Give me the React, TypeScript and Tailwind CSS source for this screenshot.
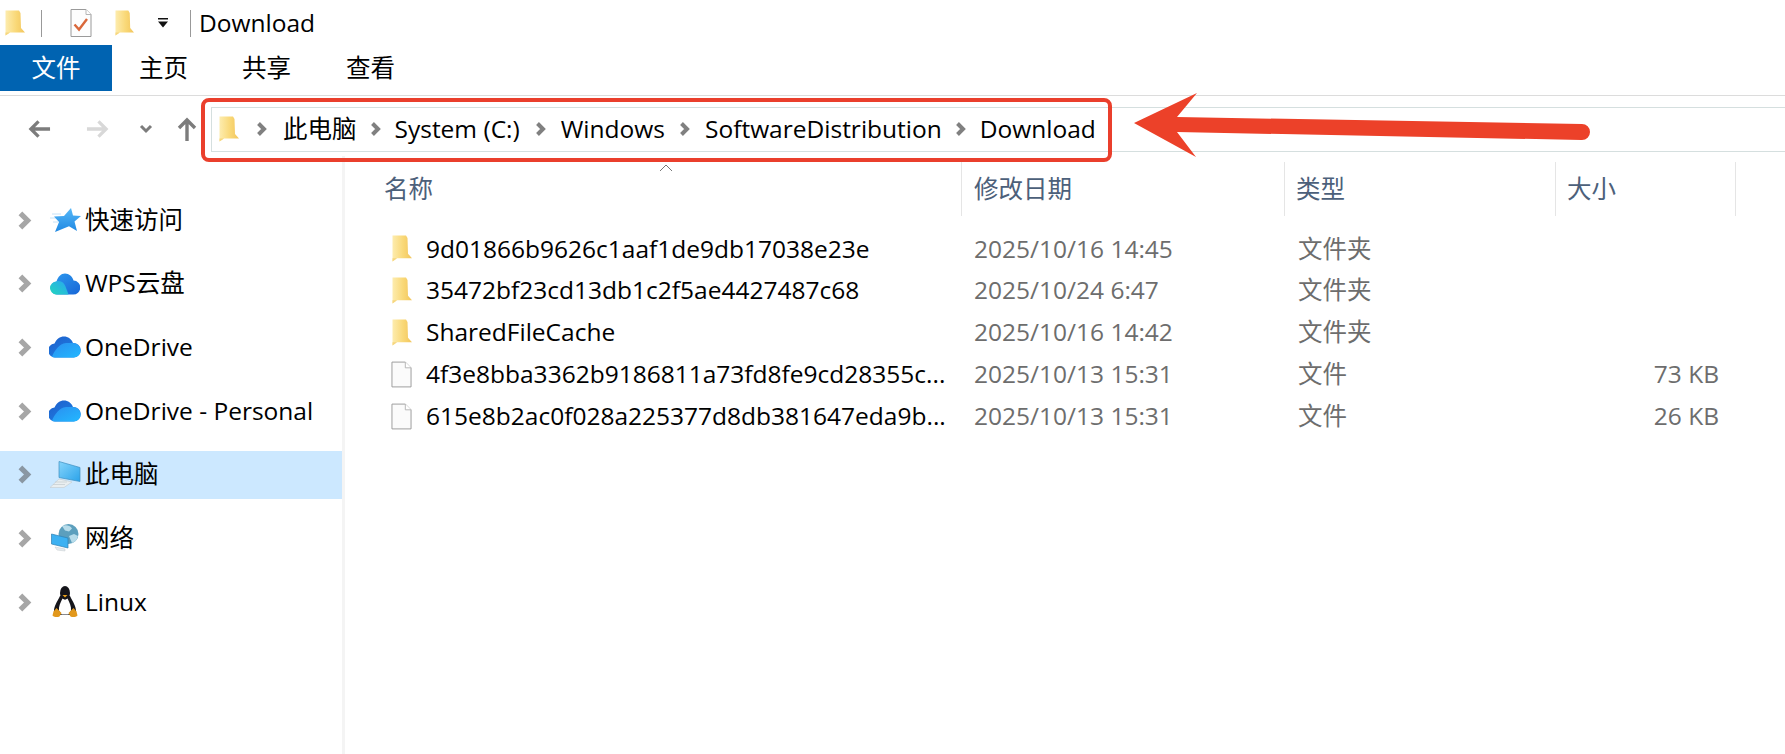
import React from "react";

const FolderIcon = ({ className = "w-[20px] h-[26px]" }: { className?: string }) => (
  <svg viewBox="0 0 20 26" className={className} preserveAspectRatio="none">
    <defs>
      <linearGradient id="fold" x1="0" y1="0" x2="1" y2="0">
        <stop offset="0" stopColor="#fdecae" />
        <stop offset="0.55" stopColor="#f9d877" />
        <stop offset="1" stopColor="#f2c55c" />
      </linearGradient>
    </defs>
    <path d="M0.500 0.500h13.500l1.500 2.500.5 15 4 4.500H5L0.500 25.500z" fill="url(#fold)" />
    <path d="M0.500 22.500H5L0.500 25.500z" fill="#f6d67f" />
  </svg>
);

const FileIcon = () => (
  <svg viewBox="0 0 22 27" className="h-[27px] w-[22px]">
    <path d="M1 .5h14l6 6v20H1z" fill="#fbfbfb" stroke="#9a9a9a" />
    <path d="M15 .5v6h6" fill="#fff" stroke="#b5b5b5" />
  </svg>
);

const DocCheckIcon = () => (
  <svg viewBox="0 0 22 28" className="h-[28px] w-[22px]">
    <path d="M1 .5h15l5 5v22H1z" fill="#fdfdfd" stroke="#9a9a9a" />
    <path d="M16 .5v5h5" fill="#fff" stroke="#b5b5b5" />
    <path d="M4.500 15.500 9 20.500 17 10" fill="none" stroke="#d9673a" strokeWidth="2.400" />
  </svg>
);

// size comes from the caller
const Chevron = ({ className = "" }: { className?: string }) => (
  <svg viewBox="0 0 12 16" className={className}>
    <path d="M2.500 2.500 8 8 2.500 13.500" fill="none" stroke="currentColor" strokeWidth="4" />
  </svg>
);

const StarIcon = () => (
  <svg viewBox="0 0 32 24" className="h-[24px] w-[32px]">
    <defs>
      <linearGradient id="star" x1="0" y1="0" x2="0" y2="1">
        <stop offset="0" stopColor="#56b8f8" />
        <stop offset="1" stopColor="#1f88e2" />
      </linearGradient>
    </defs>
    <path d="M3 6h9M1 10h8M4 14h5" stroke="#c6e2f7" strokeWidth="1" />
    <path d="M22 0l2 7.500L32 8l-6.500 5.500L28 23l-8-4.800L6 24l4-10L5 8.500l10-.5z" fill="url(#star)" />
  </svg>
);

const WpsCloud = () => (
  <svg viewBox="0 0 30 22" className="h-[22px] w-[30px]">
    <defs>
      <linearGradient id="wpsA" x1="0" y1="1" x2="1" y2="0">
        <stop offset="0" stopColor="#22d6bd" />
        <stop offset="1" stopColor="#2aa5f2" />
      </linearGradient>
      <linearGradient id="wpsB" x1="0" y1="0" x2="1" y2="1">
        <stop offset="0" stopColor="#2e9bf0" />
        <stop offset="1" stopColor="#1766d6" />
      </linearGradient>
    </defs>
    <path d="M8 21.500a6.500 6.500 0 0 1-1.500-13C8 3.500 11 .5 15 .5c4 0 7.500 3 8.500 7a7 7 0 0 1-.5 14z" fill="url(#wpsB)" />
    <path d="M6.500 21.500a6.500 6.500 0 0 1 0-13c4-1.500 7.500.8 9 5l3 8z" fill="url(#wpsA)" />
  </svg>
);

const OneDriveCloud = () => (
  <svg viewBox="0 0 32 22" className="h-[22px] w-[32px]">
    <defs>
      <linearGradient id="odA" x1="0" y1="0" x2="1" y2="1">
        <stop offset="0" stopColor="#1d5ecb" />
        <stop offset="1" stopColor="#1f86e8" />
      </linearGradient>
      <linearGradient id="odB" x1="0" y1="0" x2="1" y2="1">
        <stop offset="0" stopColor="#2b8ff0" />
        <stop offset="1" stopColor="#22b8ff" />
      </linearGradient>
    </defs>
    <path d="M7 21.500A7 7 0 0 1 5.500 7.500C7.500 3 11 .5 15 .5c4 0 7.500 2.500 9 6.500a7 7 0 0 1 1 14.500z" fill="url(#odA)" />
    <path d="M3 20.500C6 14 10 8 17 7l7 0a7.500 7.500 0 0 1 7.500 7.500c0 4-3 7-7 7H7c-2 0-3-.3-4-1z" fill="url(#odB)" />
  </svg>
);

const PcIcon = () => (
  <svg viewBox="0 0 32 27" className="h-[27px] w-[32px]">
    <defs>
      <linearGradient id="pc" x1="0" y1="0" x2="1" y2="1">
        <stop offset="0" stopColor="#86d4fb" />
        <stop offset="1" stopColor="#2ba3ea" />
      </linearGradient>
    </defs>
    <path d="M10 .5l21 6v14L10 16.500z" fill="url(#pc)" stroke="#3f8fc0" strokeWidth="0.700" />
    <path d="M10 18l13 3-8 5.500H1z" fill="#e9eef0" stroke="#c4cbcf" strokeWidth="0.600" />
    <path d="M6 21h12M4 23.500h12" stroke="#c4cbcf" strokeWidth="0.700" />
  </svg>
);

const NetworkIcon = () => (
  <svg viewBox="0 0 28 28" className="h-[28px] w-[28px]">
    <circle cx="17.500" cy="10" r="10" fill="#5c9fbd" />
    <path d="M11 2c4-1.500 8-.5 10 2.500l-3 3-4-1zM18 12l5-2 4 2c-1 4-3 6-6 7z" fill="#b7dcea" />
    <path d="M.5 10l16.500 4v10L.5 20z" fill="#3cb1f2" stroke="#2f80b2" strokeWidth="0.700" />
    <path d="M4 23l10 2v2l-8-1z" fill="#e6ecef" stroke="#c4cbcf" strokeWidth="0.500" />
  </svg>
);

const TuxIcon = () => (
  <svg viewBox="0 0 26 32" className="h-[32px] w-[26px]">
    <ellipse cx="13" cy="7" rx="5" ry="7" fill="#15151a" />
    <path d="M8 10C5 16 2 20 2 25l3 4h16l3-4c0-5-3-9-6-15z" fill="#15151a" />
    <path d="M10.500 12.500c-2 4-4 8-3.500 12l2.500 4h7l2.500-4c.5-4-1.500-8-3.500-12-1.500 1.500-3.500 1.500-5 0z" fill="#fff" />
    <path d="M10.500 9h5L13 11.500z" fill="#e8a01c" />
    <path d="M4.500 22l5 5-2 3.500c-2.500 1.200-5.500.5-7-1L1.500 25.500z" fill="#e2981c" />
    <path d="M21.500 22l-5 5 2 3.500c2.500 1.200 5.500.5 7-1L24.500 25.500z" fill="#e2981c" />
  </svg>
);

const navItems: { label: string; icon: React.ReactNode; active?: boolean }[] = [
  { label: "快速访问", icon: <StarIcon /> },
  { label: "WPS云盘", icon: <WpsCloud /> },
  { label: "OneDrive", icon: <OneDriveCloud /> },
  { label: "OneDrive - Personal", icon: <OneDriveCloud /> },
  { label: "此电脑", icon: <PcIcon />, active: true },
  { label: "网络", icon: <NetworkIcon /> },
  { label: "Linux", icon: <TuxIcon /> },
];

const files = [
  { name: "9d01866b9626c1aaf1de9db17038e23e", date: "2025/10/16 14:45", type: "文件夹", size: "", dir: true },
  { name: "35472bf23cd13db1c2f5ae4427487c68", date: "2025/10/24 6:47", type: "文件夹", size: "", dir: true },
  { name: "SharedFileCache", date: "2025/10/16 14:42", type: "文件夹", size: "", dir: true },
  { name: "4f3e8bba3362b9186811a73fd8fe9cd28355c...", date: "2025/10/13 15:31", type: "文件", size: "73 KB", dir: false },
  { name: "615e8b2ac0f028a225377d8db381647eda9b...", date: "2025/10/13 15:31", type: "文件", size: "26 KB", dir: false },
];

const crumbs = [
  { label: "此电脑", chevron: "ml-[17px]", text: "ml-[15px]" },
  { label: "System (C:)", chevron: "mx-[13px]", text: "" },
  { label: "Windows", chevron: "ml-[15px] mr-[14px]", text: "" },
  { label: "SoftwareDistribution", chevron: "mx-[14px]", text: "" },
  { label: "Download", chevron: "mx-[13px]", text: "" },
];

export default function App() {
  return (
    <div className="relative h-[754px] w-[1785px] overflow-hidden bg-white font-['Open_Sans','Noto_Sans_CJK_SC',sans-serif] text-[24.500px] text-black">
      {/* title bar */}
      <div className="flex h-[45px] items-center pl-[5px] pt-[1px]">
        <FolderIcon className="h-[26px] w-[20px]" />
        <div className="ml-[16px] h-[27px] w-px bg-[#999]" />
        <div className="ml-[28px]"><DocCheckIcon /></div>
        <div className="ml-[23px]"><FolderIcon className="h-[26px] w-[19px]" /></div>
        <svg viewBox="0 0 12 10" className="ml-[23px] h-[10px] w-[12px]">
          <path d="M1 0h10v1.500H1zM1 3.500h10L6 9.500z" fill="#111" />
        </svg>
        <div className="ml-[21px] h-[27px] w-px bg-[#999]" />
        <span className="ml-[8px]">Download</span>
      </div>

      {/* ribbon tabs */}
      <div className="flex h-[51px] border-b border-[#dcdcdc] pb-[4px]">
        <div className="flex w-[112px] items-center justify-center bg-[#0063b1] text-white">文件</div>
        <div className="ml-[27px] flex items-center">主页</div>
        <div className="ml-[54px] flex items-center">共享</div>
        <div className="ml-[55px] flex items-center">查看</div>
      </div>

      {/* nav + address */}
      <div className="flex h-[60px] items-center pt-[6px]">
        <div className="flex w-[211px] items-center pl-[28px] text-[#7c7c7c]">
          <svg viewBox="0 0 24 20" className="h-[20px] w-[23px]">
            <path d="M23 10H4M11 2l-8 8 8 8" fill="none" stroke="currentColor" strokeWidth="3.400" />
          </svg>
          <svg viewBox="0 0 24 20" className="ml-[35px] h-[20px] w-[23px] text-[#d8d8d8]">
            <path d="M1 10h19M13 2l8 8-8 8" fill="none" stroke="currentColor" strokeWidth="3.400" />
          </svg>
          <svg viewBox="0 0 14 10" className="ml-[30px] h-[10px] w-[14px]">
            <path d="M2 2l5 5 5-5" fill="none" stroke="currentColor" strokeWidth="3" />
          </svg>
          <svg viewBox="0 0 20 24" className="ml-[24px] h-[24px] w-[20px]">
            <path d="M10 24V4M2 11l8-8 8 8" fill="none" stroke="currentColor" strokeWidth="3.400" />
          </svg>
        </div>
        <div className="flex h-[45px] flex-1 items-center border-y border-l border-[#d5dfdf] pl-[7px]">
          <FolderIcon className="h-[26px] w-[20px]" />
          {crumbs.map((c) => (
            <React.Fragment key={c.label}>
              <Chevron className={`h-[16px] w-[12px] text-[#808080] ${c.chevron}`} />
              <span className={c.text}>{c.label}</span>
            </React.Fragment>
          ))}
        </div>
      </div>

      <div className="flex">
        {/* sidebar */}
        <div className="flex h-[599px] w-[345px] flex-col gap-[15.700px] border-r-[3px] border-[#f4f4f4] pt-[40px]">
          {navItems.map((n) => (
            <div
              key={n.label}
              className={`flex h-[48px] items-center ${n.active ? "bg-[#cce8ff] text-black" : ""}`}
            >
              <Chevron className={`ml-[17px] h-[21px] w-[16px] ${n.active ? "text-[#8a97a3]" : "text-[#a6a6a6]"}`} />
              <div className="ml-[13px] flex w-[38px] justify-center">{n.icon}</div>
              <span className="ml-[1px]">{n.label}</span>
            </div>
          ))}
        </div>

        {/* file list */}
        <div className="relative flex-1">
          <div className="grid h-[60px] grid-cols-[617px_323px_271px_180px] pt-[6px] text-[#4c607a]">
            <div className="flex items-center border-r border-[#e5e5e5] pl-[39px]">名称</div>
            <div className="flex items-center border-r border-[#e5e5e5] pl-[12px]">修改日期</div>
            <div className="flex items-center border-r border-[#e5e5e5] pl-[11px]">类型</div>
            <div className="flex items-center border-r border-[#e5e5e5] pl-[11px]">大小</div>
          </div>
          <div className="mt-[12px] flex flex-col">
            {files.map((f) => (
              <div key={f.name} className="grid h-[41.800px] grid-cols-[617px_323px_271px_180px] items-center">
                <div className="flex items-center pl-[46px]">
                  <div className="flex w-[21px] justify-center">
                    {f.dir ? <FolderIcon className="h-[27px] w-[20px]" /> : <FileIcon />}
                  </div>
                  <span className="ml-[14px] whitespace-nowrap">{f.name}</span>
                </div>
                <div className="pl-[12px] text-[#6d6d6d]">{f.date}</div>
                <div className="pl-[13px] text-[#6d6d6d]">{f.type}</div>
                <div className="pr-[17px] text-right text-[#6d6d6d]">{f.size}</div>
              </div>
            ))}
          </div>
        </div>
      </div>

      {/* sort caret */}
      <svg viewBox="0 0 14 8" className="absolute left-[659px] top-[164px] h-[8px] w-[14px]">
        <path d="M1 7l6-6 6 6" fill="none" stroke="#777" strokeWidth="1" />
      </svg>

      {/* annotation: red box and arrow */}
      <div className="absolute left-[201px] top-[98px] h-[64px] w-[911px] rounded-[8px] border-[4px] border-[#ea3f2c]" />
      <svg viewBox="0 0 1785 754" className="pointer-events-none absolute left-0 top-0 h-[754px] w-[1785px]">
        <path d="M1134 123 1197 93 1177 117 1582 124a8 8 0 0 1 0 16L1177 132 1196 157z" fill="#ec4129" />
      </svg>
    </div>
  );
}
